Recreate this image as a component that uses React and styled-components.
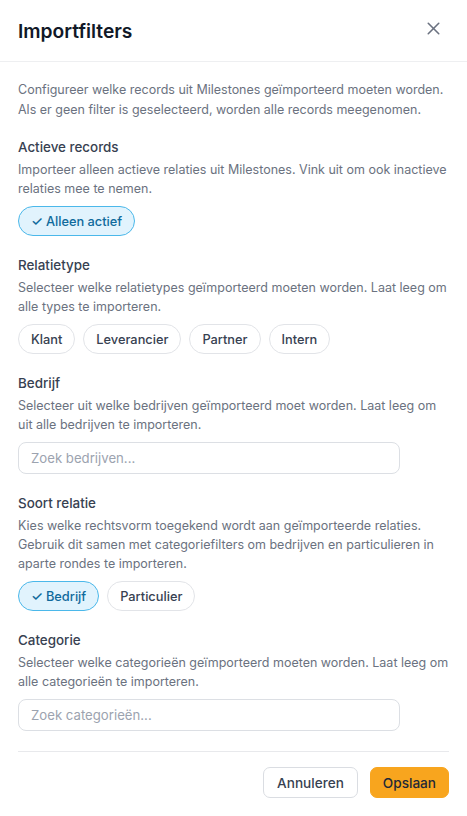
import React, { useState } from "react";
import styled, { createGlobalStyle } from "styled-components";
import { X } from "lucide-react";

const GlobalStyle = createGlobalStyle`
  * { box-sizing: border-box; }
  body {
    margin: 0;
    background: #fff;
    font-family: Inter, "Noto Sans", sans-serif;
    color: #111827;
  }
`;

const Dialog = styled.div`
  width: 467px;
  min-height: 816px;
  background: #fff;
  display: flex;
  flex-direction: column;
`;

const Header = styled.div`
  height: 62px;
  padding: 0 18px;
  display: flex;
  align-items: center;
  justify-content: space-between;
  border-bottom: 1px solid #eeeff1;
`;

const Title = styled.h2`
  margin: 0;
  font-size: 19.2px;
  font-weight: 600;
  color: #111827;
`;

const CloseButton = styled.button`
  border: none;
  background: none;
  padding: 0;
  margin-right: 5px;
  margin-top: -4px;
  color: #6b7280;
  display: flex;
  cursor: pointer;
`;

const Body = styled.div`
  padding: 18px 18px 17px;
  display: flex;
  flex-direction: column;
  gap: 19px;
`;

const Intro = styled.p`
  margin: 0 0 -2px;
  font-size: 12.5px;
  line-height: 20px;
  color: #6b7280;
`;

const Section = styled.div`
  display: flex;
  flex-direction: column;
`;

const Label = styled.div`
  font-size: 13.4px;
  font-weight: 500;
  line-height: 20px;
  color: #374151;
  margin-bottom: 3px;
`;

const Help = styled.p`
  margin: 0 0 8px;
  font-size: 12.5px;
  line-height: 19px;
  color: #6b7280;
`;

const Chips = styled.div`
  display: flex;
  flex-wrap: wrap;
  gap: 8px;
`;

const Chip = styled.button`
  height: 30px;
  padding: 0 12px;
  border-radius: 999px;
  font-family: inherit;
  font-size: 12.8px;
  font-weight: 500;
  cursor: pointer;
  display: inline-flex;
  align-items: center;
  border: 1px solid ${(p) => (p.$active ? "#4bb8ea" : "#e2e4e8")};
  background: ${(p) => (p.$active ? "#e1f3fd" : "#fff")};
  color: ${(p) => (p.$active ? "#0f6a9c" : "#374151")};
`;

const Check = styled.span`
  font-size: 13.5px;
  margin-right: 3px;
`;

const Search = styled.input`
  width: 382px;
  height: 32px;
  padding: 0 12px;
  border: 1px solid #dcdfe4;
  border-radius: 8px;
  font-family: inherit;
  font-size: 13.2px;
  color: #111827;
  outline: none;
  &::placeholder {
    color: #9ca3af;
  }
`;

const Footer = styled.div`
  margin-top: 1px;
  border-top: 1px solid #e8e9ec;
  padding-top: 15px;
  display: flex;
  justify-content: flex-end;
  gap: 12px;
`;

const Button = styled.button`
  height: 31px;
  padding: 0 ${(p) => (p.$primary ? "12px" : "13px")};
  border-radius: 7px;
  font-family: inherit;
  font-size: 13.6px;
  font-weight: 500;
  cursor: pointer;
  border: 1px solid ${(p) => (p.$primary ? "#f8a51e" : "#dadde2")};
  background: ${(p) => (p.$primary ? "#f8a51e" : "#fff")};
  color: ${(p) => (p.$primary ? "#1f2937" : "#374151")};
`;

const relationTypes = ["Klant", "Leverancier", "Partner", "Intern"];
const kinds = ["Bedrijf", "Particulier"];

export default function App() {
  const [activeOnly, setActiveOnly] = useState(true);
  const [types, setTypes] = useState([]);
  const [kind, setKind] = useState("Bedrijf");

  function toggleType(t) {
    setTypes((prev) => (prev.includes(t) ? prev.filter((x) => x !== t) : [...prev, t]));
  }

  return (
    <>
      <GlobalStyle />
      <Dialog>
        <Header>
          <Title>Importfilters</Title>
          <CloseButton aria-label="Sluiten">
            <X size={21} strokeWidth={1.8} />
          </CloseButton>
        </Header>
        <Body>
          <Intro>
            Configureer welke records uit Milestones geïmporteerd moeten worden. Als er geen filter is
            geselecteerd, worden alle records meegenomen.
          </Intro>

          <Section>
            <Label>Actieve records</Label>
            <Help>
              Importeer alleen actieve relaties uit Milestones. Vink uit om ook inactieve relaties mee te
              nemen.
            </Help>
            <Chips>
              <Chip $active={activeOnly} onClick={() => setActiveOnly(!activeOnly)}>
                {activeOnly && <Check>✓</Check>}Alleen actief
              </Chip>
            </Chips>
          </Section>

          <Section>
            <Label>Relatietype</Label>
            <Help>
              Selecteer welke relatietypes geïmporteerd moeten worden. Laat leeg om alle types te
              importeren.
            </Help>
            <Chips>
              {relationTypes.map((t) => (
                <Chip key={t} $active={types.includes(t)} onClick={() => toggleType(t)}>
                  {types.includes(t) && <Check>✓</Check>}
                  {t}
                </Chip>
              ))}
            </Chips>
          </Section>

          <Section>
            <Label>Bedrijf</Label>
            <Help>
              Selecteer uit welke bedrijven geïmporteerd moet worden. Laat leeg om uit alle bedrijven te
              importeren.
            </Help>
            <Search placeholder="Zoek bedrijven..." />
          </Section>

          <Section>
            <Label>Soort relatie</Label>
            <Help>
              Kies welke rechtsvorm toegekend wordt aan geïmporteerde relaties. Gebruik dit samen met
              categoriefilters om bedrijven en particulieren in aparte rondes te importeren.
            </Help>
            <Chips>
              {kinds.map((k) => (
                <Chip key={k} $active={kind === k} onClick={() => setKind(k)}>
                  {kind === k && <Check>✓</Check>}
                  {k}
                </Chip>
              ))}
            </Chips>
          </Section>

          <Section>
            <Label>Categorie</Label>
            <Help>
              Selecteer welke categorieën geïmporteerd moeten worden. Laat leeg om alle categorieën te
              importeren.
            </Help>
            <Search placeholder="Zoek categorieën..." />
          </Section>

          <Footer>
            <Button>Annuleren</Button>
            <Button $primary>Opslaan</Button>
          </Footer>
        </Body>
      </Dialog>
    </>
  );
}
